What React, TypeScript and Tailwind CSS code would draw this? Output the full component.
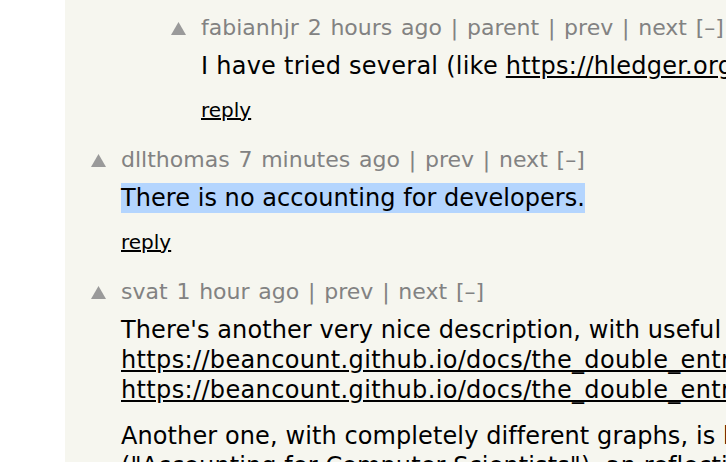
const font = { fontFamily: '"DejaVu Sans", Verdana, sans-serif' };

function Arrow() {
  return (
    <svg width="15" height="13" viewBox="0 0 15 13" className="mt-[9px] shrink-0">
      <path d="M7.5 0 L15 13 L0 13 Z" fill="#9a9a9a" />
    </svg>
  );
}

function Meta({ user, age, parent }: { user: string; age: string; parent?: boolean }) {
  return (
    <div className="text-[22px] leading-[30px] text-[#828282] whitespace-nowrap [word-spacing:1.8px]">
      {user} {age} {parent ? "| parent " : ""}| prev | next [–]
    </div>
  );
}

function Reply() {
  return (
    <div className="mt-[14px] text-[20px] leading-[30px] text-black">
      <span className="underline">reply</span>
    </div>
  );
}

export default function App() {
  return (
    <div className="w-[726px] h-[462px] overflow-hidden flex bg-white" style={font}>
      <div className="w-[65px] shrink-0 bg-white" />
      <div className="flex-1 bg-[#f6f6ef] pt-[13px] overflow-hidden">
        <div className="w-[1400px]">
          {/* nested comment */}
          <div className="flex pl-[106px]">
            <Arrow />
            <div className="ml-[15px]">
              <Meta user="fabianhjr" age="2 hours ago" parent />
              <div className="mt-[8px] text-[24px] leading-[30px] tracking-[0.25px] text-black whitespace-nowrap">
                I have tried several (like <span className="underline">https://hledger.org/</span> and others)
              </div>
              <Reply />
            </div>
          </div>

          <div className="flex pl-[26px] mt-[20px]">
            <Arrow />
            <div className="ml-[15px]">
              <Meta user="dllthomas" age="7 minutes ago" />
              <div className="mt-[8px] text-[24px] leading-[30px] tracking-[0.05px] text-black whitespace-nowrap">
                <span className="bg-[#b4d5fe] py-px">There is no accounting for developers.</span>
              </div>
              <Reply />
            </div>
          </div>

          <div className="flex pl-[26px] mt-[20px]">
            <Arrow />
            <div className="ml-[15px]">
              <Meta user="svat" age="1 hour ago" />
              <div className="mt-[8px] text-[24px] leading-[30px] tracking-[0.1px] text-black whitespace-nowrap">
                <div>There's another very nice description, with useful <span className="ml-[4px]">diagrams, at</span></div>
                <div className="underline tracking-[0.35px]">https://beancount.github.io/docs/the_double_entry_counting_method.html</div>
                <div className="underline tracking-[0.35px]">https://beancount.github.io/docs/the_double_entry_counting_method.pdf</div>
                <div className="mt-[16px]">Another one, with completely different graphs, is here</div>
                <div>("Accounting for Computer Scientists"), an reflection on</div>
              </div>
            </div>
          </div>
        </div>
      </div>
    </div>
  );
}
